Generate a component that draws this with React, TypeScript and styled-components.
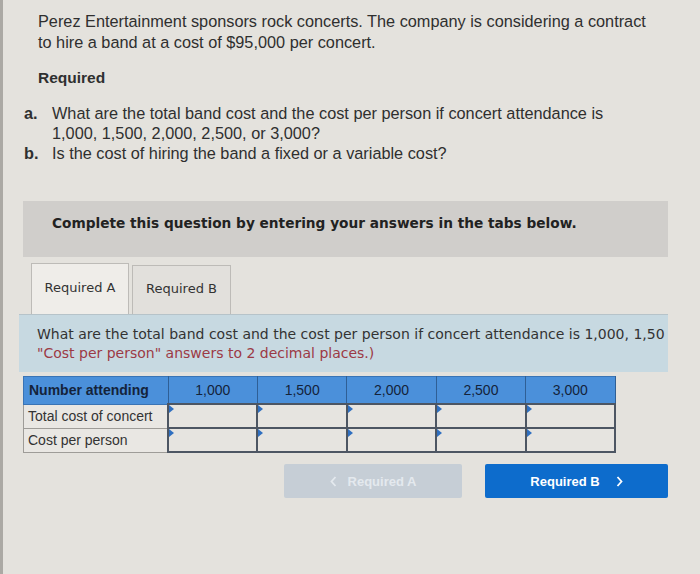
import * as React from "react";
import styled, { createGlobalStyle } from "styled-components";

const GlobalStyle = createGlobalStyle`
  html, body {
    margin: 0;
    padding: 0;
    background: #e4e2dd;
  }
`;

const Page = styled.div`
  box-sizing: border-box;
  min-height: 574px;
  width: 700px;
  border-left: 3px solid #aba9a4;
  padding: 11px 32px 0 20px;
  font-family: "Liberation Sans", Arial, sans-serif;
  color: #2f2f2f;
`;

const Intro = styled.p`
  margin: 0 0 0 15px;
  font-size: 16.3px;
  line-height: 21px;
  white-space: nowrap;
`;

const Heading = styled.div`
  margin: 15px 0 0 15px;
  font-size: 15.5px;
  line-height: 20px;
  font-weight: bold;
`;

const List = styled.ol`
  list-style: none;
  margin: 15px 0 0;
  padding: 0;
`;

const Item = styled.li`
  display: flex;
  font-size: 16.3px;
  line-height: 20px;
  white-space: nowrap;
`;

const Marker = styled.span`
  flex: 0 0 28px;
  font-weight: bold;
  padding-left: 1px;
`;

const Notice = styled.div`
  box-sizing: border-box;
  margin-top: 38px;
  height: 56px;
  padding: 13px 0 0 29px;
  background: #d0cecb;
  font-family: "DejaVu Sans", Verdana, sans-serif;
  font-weight: bold;
  font-size: 13.7px;
  line-height: 18px;
  color: #222;
`;

const Tabs = styled.div`
  display: flex;
  align-items: flex-end;
  gap: 3px;
  margin: 6px 0 0 8px;
`;

const Tab = styled.div<{ $active?: boolean }>`
  box-sizing: border-box;
  width: ${(p) => (p.$active ? 98 : 99)}px;
  height: ${(p) => (p.$active ? 51 : 49)}px;
  display: flex;
  align-items: center;
  justify-content: center;
  padding-bottom: 4px;
  background: ${(p) => (p.$active ? "#efede9" : "#e2e0dc")};
  border: 1px solid #bdbbb7;
  border-bottom: none;
  font-family: "DejaVu Sans", Verdana, sans-serif;
  font-size: 13px;
  color: #333;
`;

const Prompt = styled.div`
  box-sizing: border-box;
  margin-left: -4px;
  height: 58px;
  padding: 10px 0 0 18px;
  background: #c7d9e1;
  border-top: 1px solid #b6c3c9;
  overflow: hidden;
  white-space: nowrap;
  font-family: "DejaVu Sans", Verdana, sans-serif;
  font-size: 14px;
  line-height: 19px;
  color: #333;
`;

const Hint = styled.div`
  color: #9c3a45;
`;

const Grid = styled.table`
  margin-top: 4px;
  border-collapse: collapse;
  width: 593px;
  table-layout: fixed;
  font-family: "Liberation Sans", Arial, sans-serif;
  font-size: 14px;
`;

const HeadCell = styled.th<{ $first?: boolean }>`
  height: 26px;
  padding: 0 5px;
  background: #4b90da;
  border: 1px solid #3a74b5;
  border-right: 1px solid #2f5f95;
  text-align: ${(p) => (p.$first ? "left" : "center")};
  font-weight: ${(p) => (p.$first ? "bold" : "normal")};
  color: #14233a;
  width: ${(p) => (p.$first ? 133 : 78)}px;
`;

const Label = styled.td`
  height: 23px;
  padding: 0 4px;
  background: #e9e7e3;
  border: 1px solid #9e9c98;
  color: #333;
  white-space: nowrap;
`;

const InputCell = styled.td`
  position: relative;
  height: 21px;
  padding: 0;
  background: #e6e4e0;
  border: 2px solid #4d5663;
`;

const Flag = styled.span`
  position: absolute;
  top: 0;
  left: 0;
  width: 0;
  height: 0;
  border-top: 4px solid transparent;
  border-bottom: 4px solid transparent;
  border-left: 5px solid #2f6fc0;
`;

const Nav = styled.div`
  display: flex;
  justify-content: flex-end;
  gap: 23px;
  margin-top: 11px;
`;

const NavButton = styled.div<{ $disabled?: boolean }>`
  box-sizing: border-box;
  width: ${(p) => (p.$disabled ? 178 : 183)}px;
  height: 34px;
  display: flex;
  align-items: center;
  justify-content: center;
  gap: ${(p) => (p.$disabled ? 11 : 16)}px;
  border-radius: 2px;
  background: ${(p) => (p.$disabled ? "#c6ced6" : "#0d6ccc")};
  color: ${(p) => (p.$disabled ? "#e4e9ee" : "#ffffff")};
  font-family: "Liberation Sans", Arial, sans-serif;
  font-size: 13px;
  font-weight: bold;
`;

const Chevron = ({ dir }: { dir: "left" | "right" }) => (
  <svg width="7" height="11" viewBox="0 0 7 11" fill="none">
    <polyline
      points={dir === "left" ? "5.5,1 1.5,5.5 5.5,10" : "1.5,1 5.5,5.5 1.5,10"}
      stroke="currentColor"
      strokeWidth="1.8"
    />
  </svg>
);

const columns = ["1,000", "1,500", "2,000", "2,500", "3,000"];
const rows = ["Total cost of concert", "Cost per person"];

export default function App() {
  return (
    <>
      <GlobalStyle />
      <Page>
        <Intro>
          Perez Entertainment sponsors rock concerts. The company is considering a contract
          <br />
          to hire a band at a cost of $95,000 per concert.
        </Intro>
        <Heading>Required</Heading>
        <List>
          <Item>
            <Marker>a.</Marker>
            <span>
              What are the total band cost and the cost per person if concert attendance is
              <br />
              1,000, 1,500, 2,000, 2,500, or 3,000?
            </span>
          </Item>
          <Item>
            <Marker>b.</Marker>
            <span>Is the cost of hiring the band a fixed or a variable cost?</span>
          </Item>
        </List>
        <Notice>Complete this question by entering your answers in the tabs below.</Notice>
        <Tabs>
          <Tab $active>Required A</Tab>
          <Tab>Required B</Tab>
        </Tabs>
        <Prompt>
          <div>
            What are the total band cost and the cost per person if concert attendance is 1,000, 1,50
          </div>
          <Hint>"Cost per person" answers to 2 decimal places.)</Hint>
        </Prompt>
        <Grid>
          <thead>
            <tr>
              <HeadCell $first>Number attending</HeadCell>
              {columns.map((c) => (
                <HeadCell key={c}>{c}</HeadCell>
              ))}
            </tr>
          </thead>
          <tbody>
            {rows.map((r) => (
              <tr key={r}>
                <Label>{r}</Label>
                {columns.map((c) => (
                  <InputCell key={c}>
                    <Flag />
                  </InputCell>
                ))}
              </tr>
            ))}
          </tbody>
        </Grid>
        <Nav>
          <NavButton $disabled>
            <Chevron dir="left" />
            <span>Required A</span>
          </NavButton>
          <NavButton>
            <span>Required B</span>
            <Chevron dir="right" />
          </NavButton>
        </Nav>
      </Page>
    </>
  );
}
